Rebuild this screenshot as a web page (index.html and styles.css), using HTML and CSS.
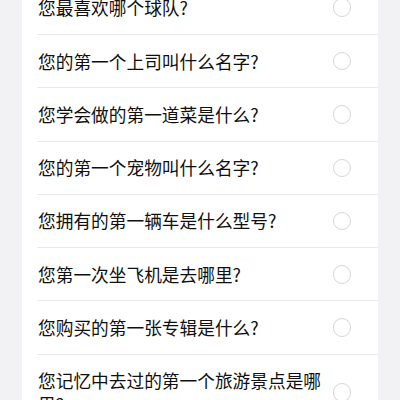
FILE: index.html
```html
<!DOCTYPE html>
<html lang="zh-CN">
<head>
<meta charset="utf-8">
<link rel="stylesheet" href="styles.css">
</head>
<body>
<ul class="card">
  <li class="row"><span class="q">您最喜欢哪个球队?</span><span class="radio"></span></li>
  <li class="row"><span class="q">您的第一个上司叫什么名字?</span><span class="radio"></span></li>
  <li class="row"><span class="q">您学会做的第一道菜是什么?</span><span class="radio"></span></li>
  <li class="row"><span class="q">您的第一个宠物叫什么名字?</span><span class="radio"></span></li>
  <li class="row"><span class="q">您拥有的第一辆车是什么型号?</span><span class="radio"></span></li>
  <li class="row"><span class="q">您第一次坐飞机是去哪里?</span><span class="radio"></span></li>
  <li class="row"><span class="q">您购买的第一张专辑是什么?</span><span class="radio"></span></li>
  <li class="row"><span class="q">您记忆中去过的第一个旅游景点是哪里?</span><span class="radio"></span></li>
</ul>
</body>
</html>
```
FILE: styles.css
```css
html, body {
  margin: 0;
  padding: 0;
  background: #f2f2f4;
  height: 400px;
  overflow: hidden;
}
.card {
  list-style: none;
  margin: -19.3px 22px 0 22px;
  padding: 0;
  background: #ffffff;
  font-family: "Noto Sans CJK SC", "Noto Sans", sans-serif;
  font-size: 17.7px;
  font-weight: 400;
  line-height: 23.3px;
  color: #0f0f0f;
}
.row {
  display: flex;
  align-items: center;
  gap: 6px;
  margin-left: 15px;
  padding: 14.5px 27px 14.5px 1px;
  border-top: 1px solid #e9e9eb;
}
.row:first-child {
  border-top: none;
  padding-top: 15px;
  padding-bottom: 15px;
}
.q {
  flex: 1;
}
.radio {
  flex: none;
  width: 16.4px;
  height: 16.4px;
  border: 1.8px solid #d6d6d6;
  border-radius: 50%;
}
```
